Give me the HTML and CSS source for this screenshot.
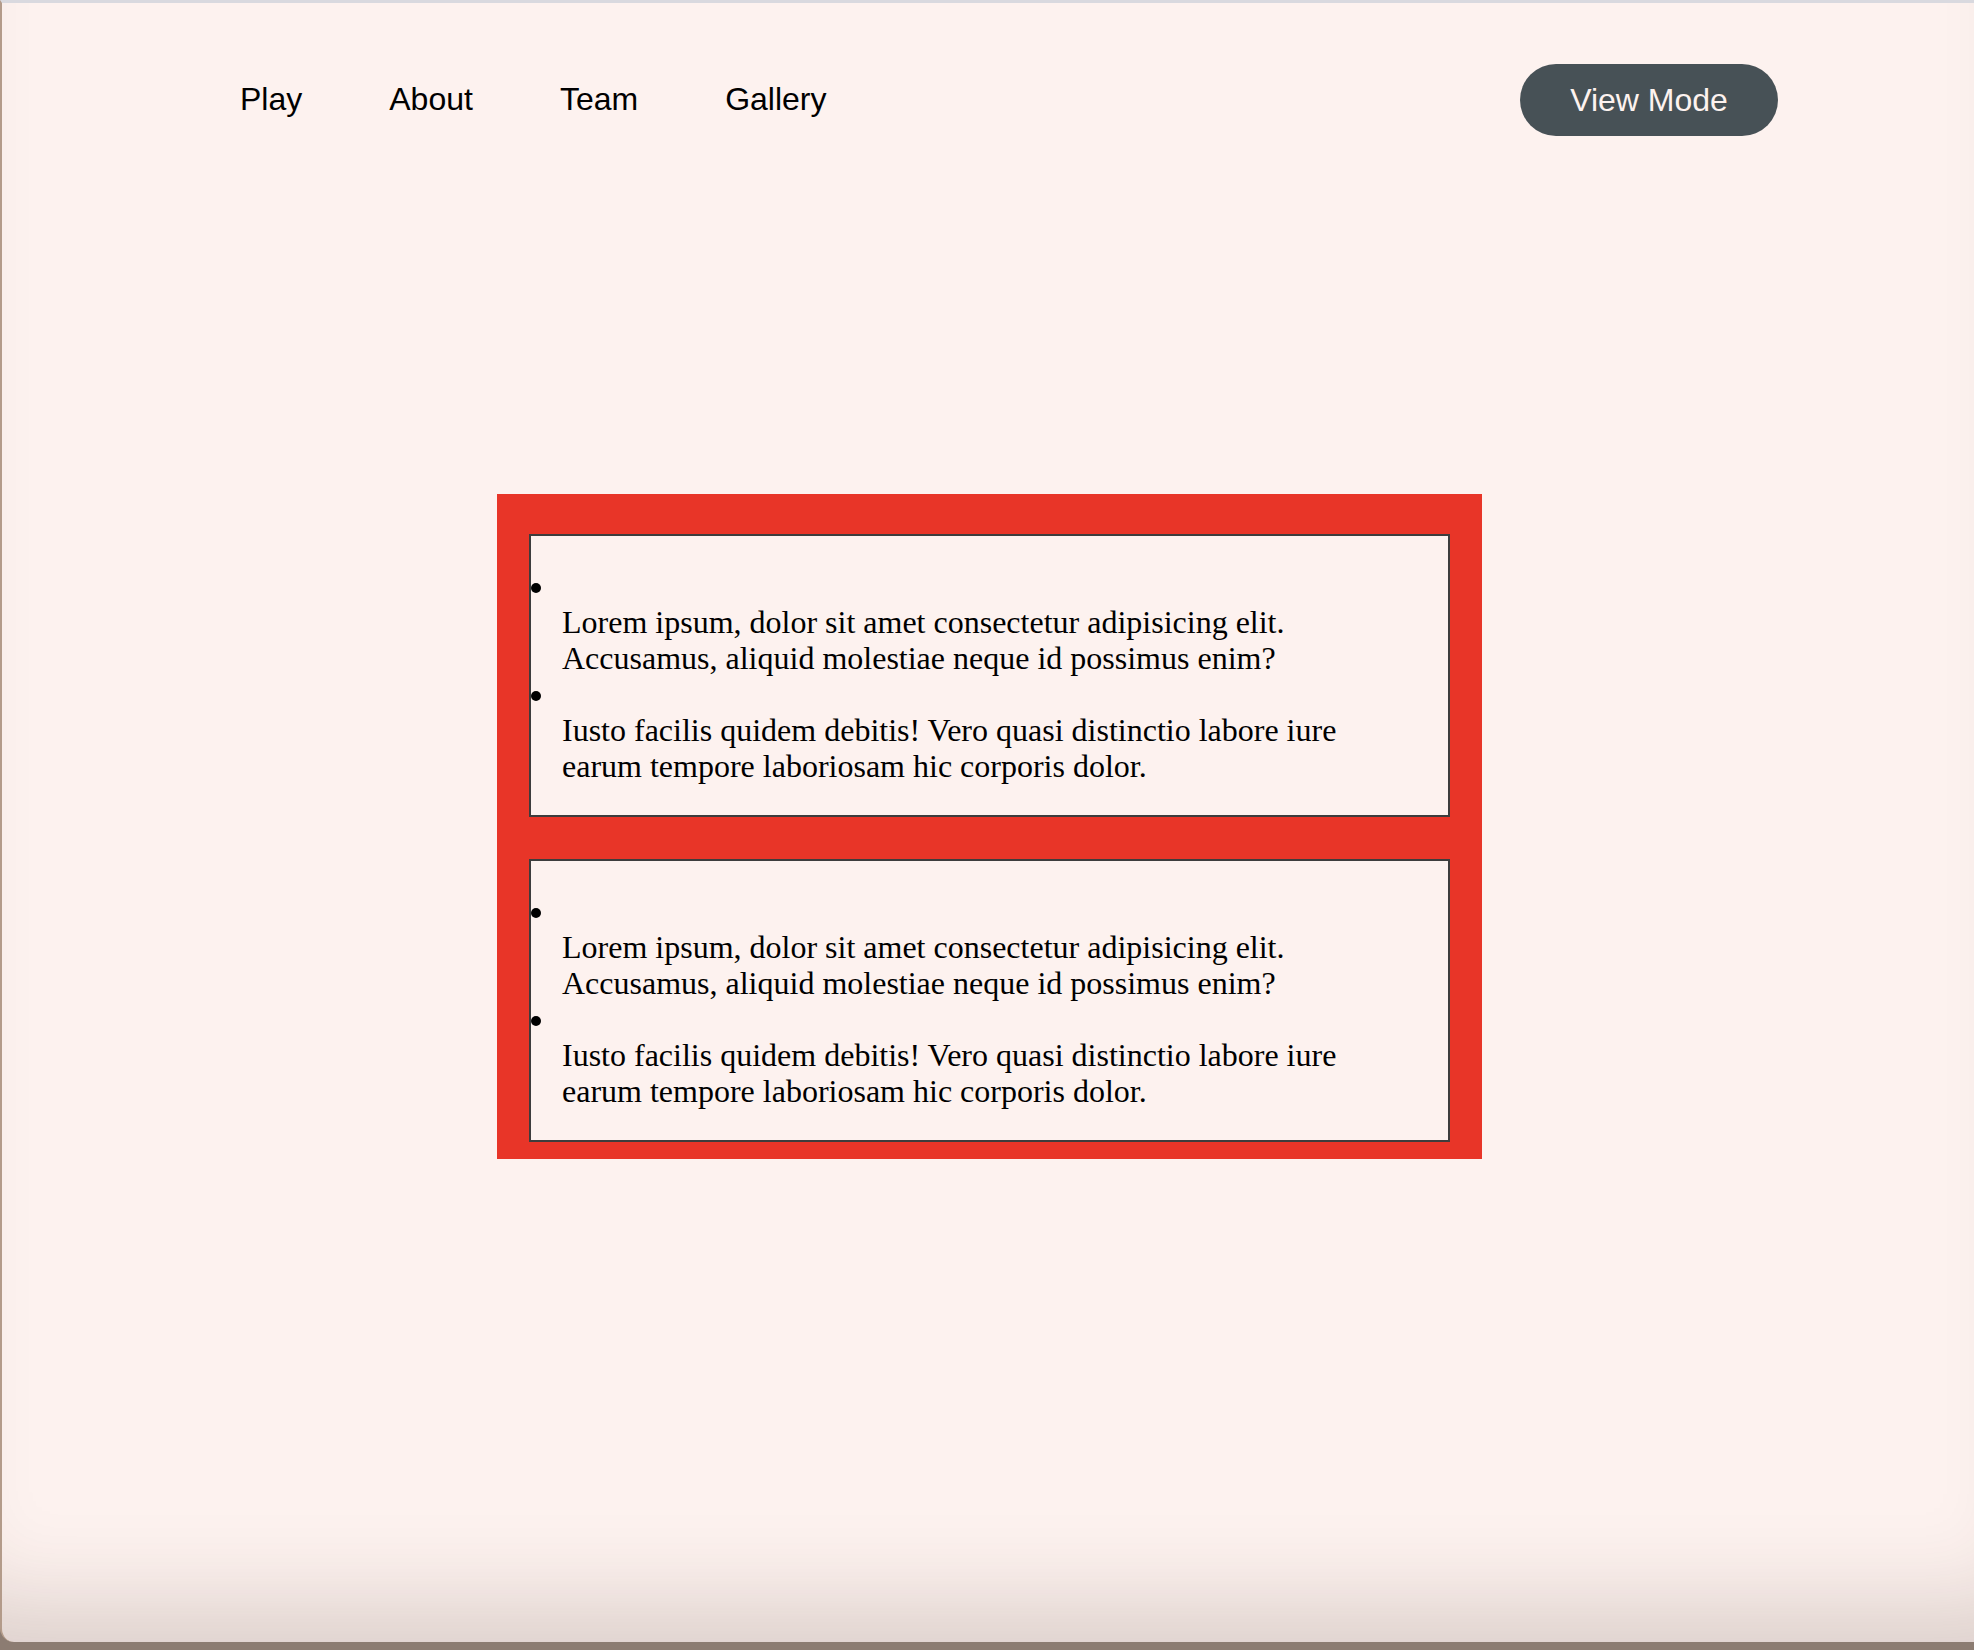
FILE: index.html
```html
<!DOCTYPE html>
<html lang="en">
<head>
<meta charset="utf-8">
<title>Play</title>
<link rel="stylesheet" href="styles.css">
</head>
<body>
  <header class="site-header">
    <nav class="main-nav">
      <a class="nav-link" href="#">Play</a>
      <a class="nav-link" href="#">About</a>
      <a class="nav-link" href="#">Team</a>
      <a class="nav-link" href="#">Gallery</a>
    </nav>
    <button class="mode-btn" type="button">View Mode</button>
  </header>

  <main class="content">
    <section class="panel">
      <ul class="card">
        <li class="card-item"><p class="card-text">Lorem ipsum, dolor sit amet consectetur adipisicing elit. Accusamus, aliquid molestiae neque id possimus enim?</p></li>
        <li class="card-item"><p class="card-text">Iusto facilis quidem debitis! Vero quasi distinctio labore iure earum tempore laboriosam hic corporis dolor.</p></li>
      </ul>
      <ul class="card">
        <li class="card-item"><p class="card-text">Lorem ipsum, dolor sit amet consectetur adipisicing elit. Accusamus, aliquid molestiae neque id possimus enim?</p></li>
        <li class="card-item"><p class="card-text">Iusto facilis quidem debitis! Vero quasi distinctio labore iure earum tempore laboriosam hic corporis dolor.</p></li>
      </ul>
    </section>
  </main>
</body>
</html>
```

FILE: styles.css
```css
html {
  background: #8c7c72;
  height: 100%;
}

body {
  margin: 0;
  height: 1642px;
  box-sizing: border-box;
  background: #fdf2ef;
  border-top: 3px solid #d9d9df;
  border-left: 2px solid #b39b8a;
  border-bottom-left-radius: 14px;
  box-shadow: inset 0 -100px 90px -60px rgba(60, 40, 30, 0.17);
  font-family: "Liberation Serif", "Times New Roman", serif;
  color: #000;
}

.site-header {
  display: flex;
  align-items: center;
  justify-content: space-between;
  padding: 61px 196px 0 238px;
}

.main-nav {
  display: flex;
  align-items: center;
  gap: 87px;
  padding-bottom: 2px;
}

.nav-link {
  font-family: "Liberation Sans", Arial, sans-serif;
  font-size: 32px;
  color: #000;
  text-decoration: none;
}

.mode-btn {
  font-family: "Liberation Sans", Arial, sans-serif;
  font-size: 32px;
  color: #fdf2ef;
  background: #475156;
  border: none;
  border-radius: 36px;
  height: 72px;
  width: 258px;
  padding: 0;
}

.content {
  display: flex;
  justify-content: center;
  padding: 358px 0 0 3px;
}

.panel {
  width: 985px;
  box-sizing: border-box;
  background: #e83528;
  padding: 40px 32px 17px;
  display: flex;
  flex-direction: column;
  gap: 42px;
}

.card {
  margin: 0;
  padding: 32px 0 31px;
  border: 2px solid #3d3d3d;
  background: #fdf2ef;
  list-style: disc inside;
  font-size: 32px;
  line-height: 36px;
}

.card-text {
  margin: 0 0 0 31px;
  max-width: 820px;
}
```
